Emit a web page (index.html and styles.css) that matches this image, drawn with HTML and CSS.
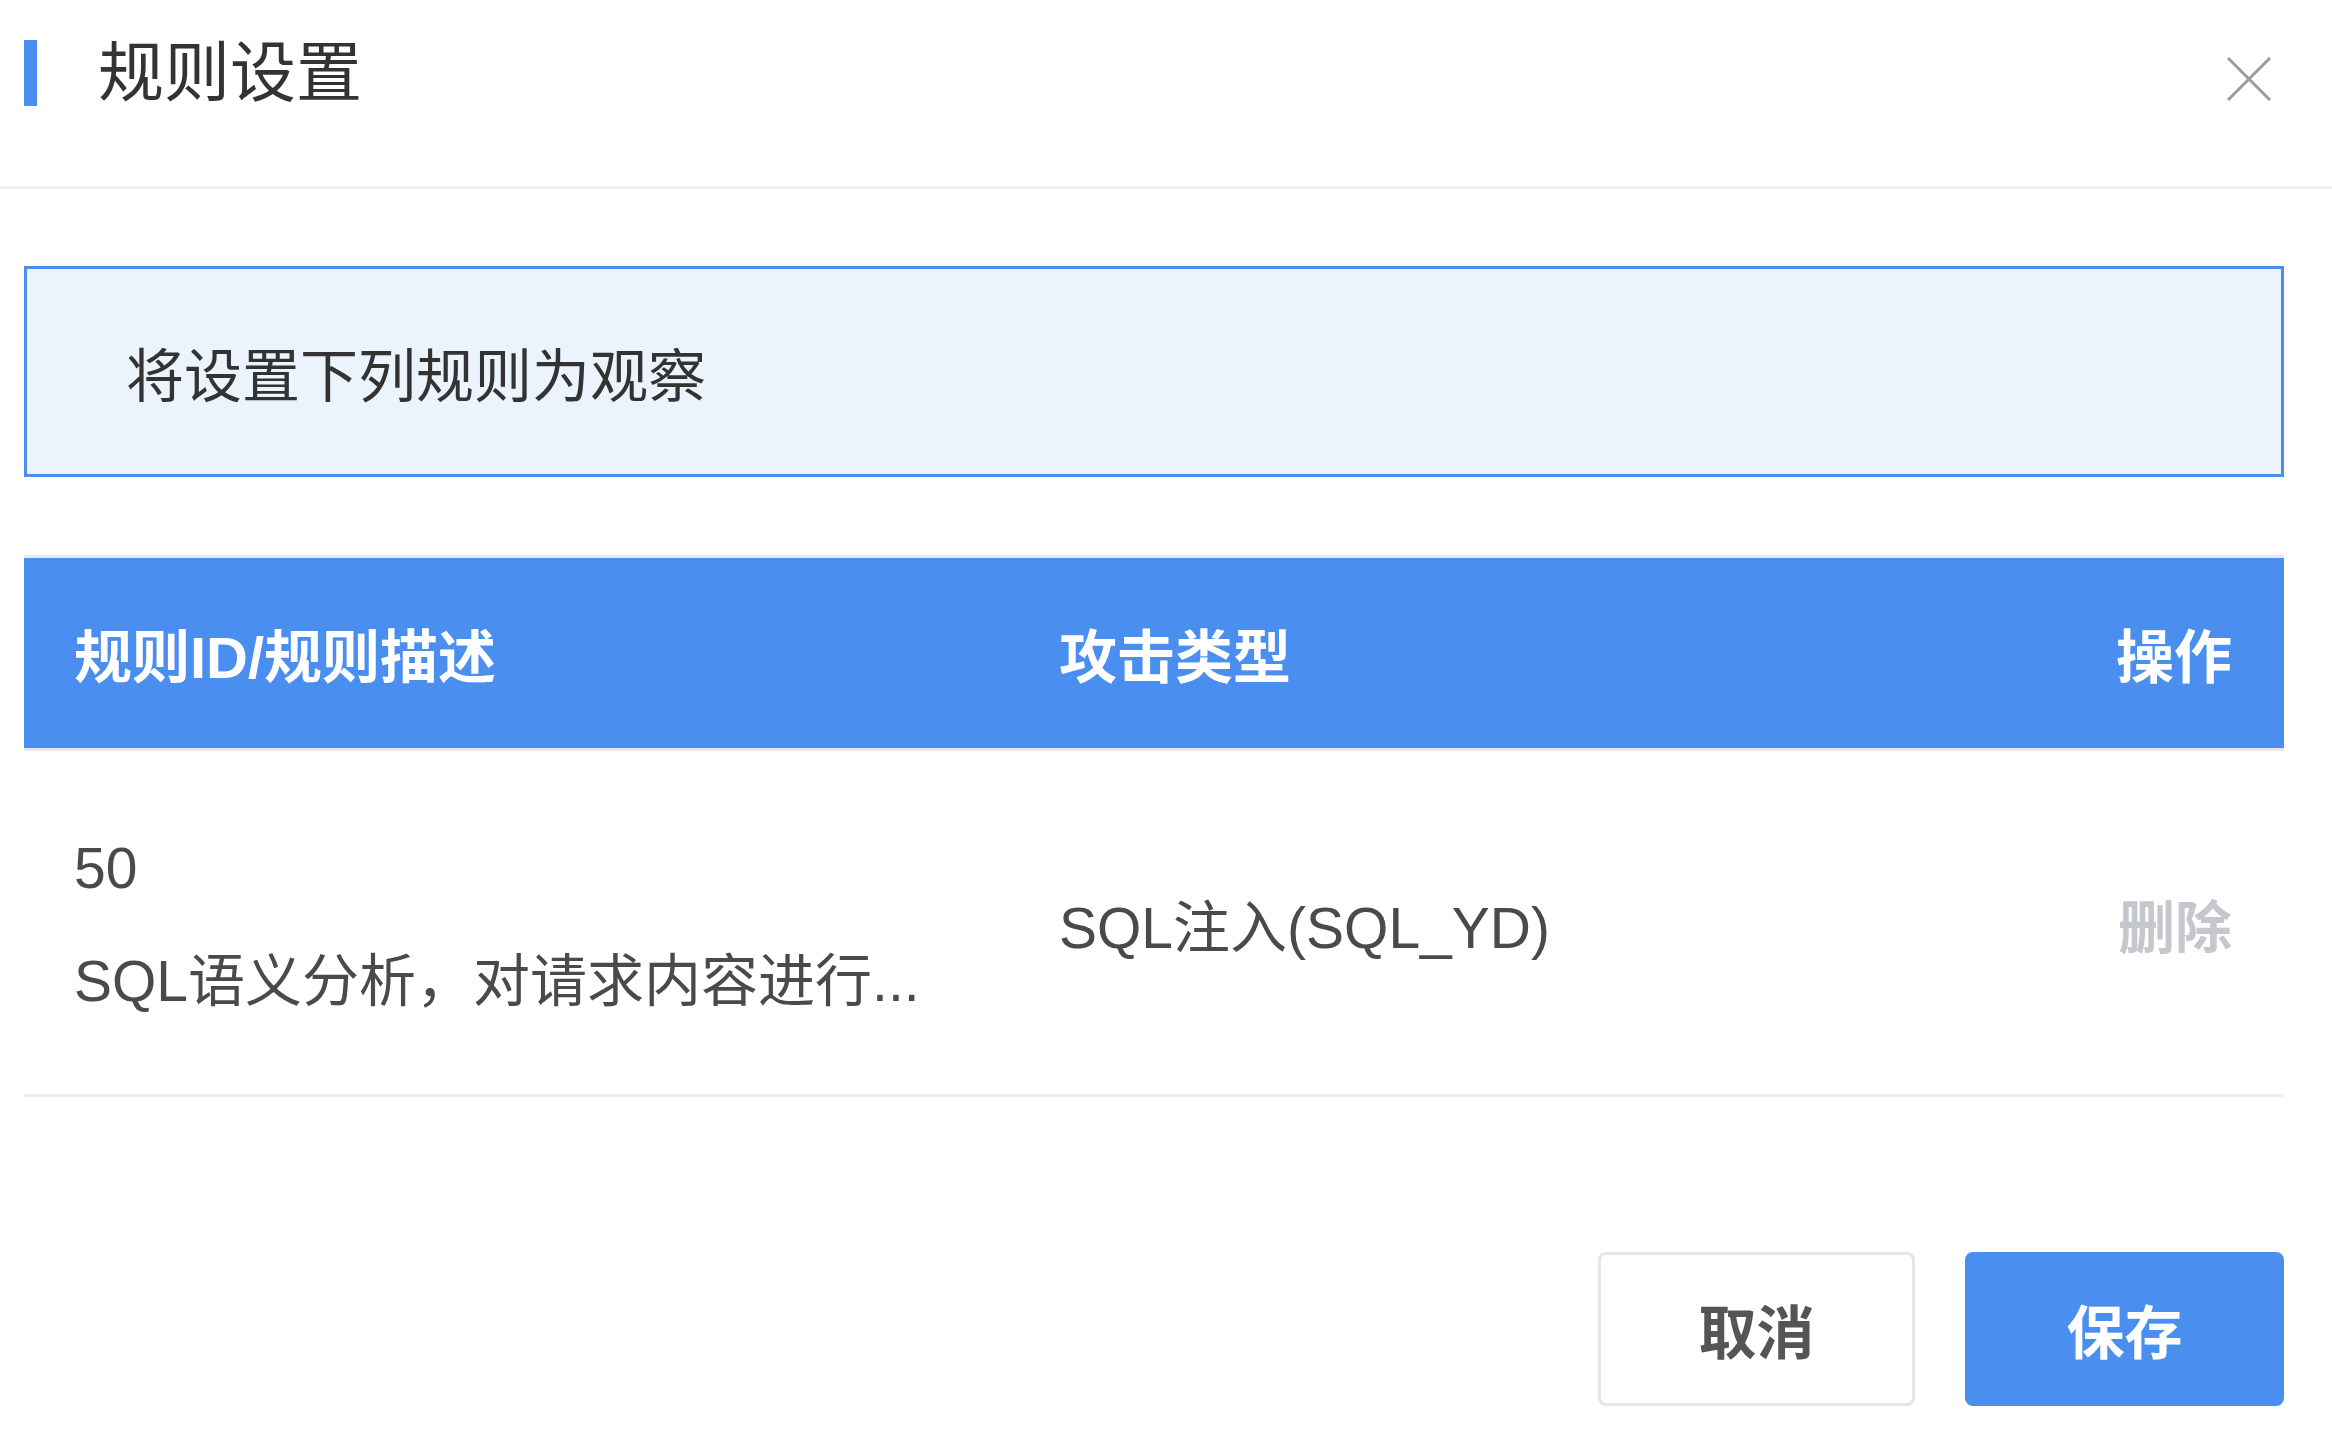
FILE: index.html
```html
<!DOCTYPE html>
<html lang="zh-CN">
<head>
  <meta charset="UTF-8">
  <meta name="viewport" content="width=device-width, initial-scale=1.0">
  <title>规则设置</title>
  <link rel="stylesheet" href="styles.css">
</head>
<body>
  <div class="dialog">
    <header class="dialog-header">
      <span class="title-mark"></span>
      <h2 class="dialog-title">规则设置</h2>
      <button type="button" class="dialog-close" aria-label="关闭">
        <svg width="44" height="44" viewBox="0 0 44 44">
          <path d="M1 1 L43 43 M43 1 L1 43" stroke="#9a9ca3" stroke-width="3" fill="none"/>
        </svg>
      </button>
    </header>

    <div class="dialog-body">
      <div class="notice">将设置下列规则为观察</div>

      <div class="rule-table">
        <div class="rule-row rule-head">
          <div class="cell">规则ID/规则描述</div>
          <div class="cell">攻击类型</div>
          <div class="cell cell-op">操作</div>
        </div>
        <div class="rule-row">
          <div class="cell cell-rule">
            <div class="rule-id">50</div>
            <div class="rule-desc">SQL语义分析，对请求内容进行...</div>
          </div>
          <div class="cell">SQL注入(SQL_YD)</div>
          <div class="cell cell-op"><a class="link-delete">删除</a></div>
        </div>
      </div>
    </div>

    <footer class="dialog-footer">
      <button type="button" class="btn">取消</button>
      <button type="button" class="btn btn-primary">保存</button>
    </footer>
  </div>
</body>
</html>
```

FILE: styles.css
```css
body {
  margin: 0;
  background: #ffffff;
  font-family: "Liberation Sans", "Noto Sans CJK SC", sans-serif;
  font-size: 58px;
  color: #333333;
}

.dialog-header {
  display: flex;
  align-items: flex-start;
  height: 146px;
  padding: 40px 0 0 24px;
  border-bottom: 3px solid #f0f0f0;
}

.title-mark {
  width: 13px;
  height: 66px;
  background: #4a8ff0;
}

.dialog-title {
  margin: 0 0 0 61px;
  font-size: 66px;
  font-weight: normal;
  line-height: 66px;
  color: #333333;
}

.dialog-close {
  margin: 17px 61px 0 auto;
  padding: 0;
  border: none;
  background: none;
  line-height: 0;
}

.dialog-body {
  padding: 77px 48px 0 24px;
}

.notice {
  display: flex;
  align-items: center;
  height: 205px;
  padding-left: 99px;
  border: 3px solid #4a8ff0;
  background: #ebf3fd;
  color: #333333;
}

.rule-table {
  margin-top: 78px;
  border-top: 3px solid #e4e8ef;
}

.rule-row {
  display: grid;
  grid-template-columns: 985px 1fr 400px;
  align-items: center;
  height: 343px;
  border-bottom: 3px solid #ebeef5;
  font-size: 57px;
  color: #4a4a4a;
}

.rule-head {
  height: 190px;
  border-bottom: 3px solid #e4e8ef;
  background: #4a8ff0;
  font-size: 58px;
  color: #ffffff;
  font-weight: bold;
}

.cell {
  padding: 0 50px;
}

.cell-op {
  padding-right: 52px;
  text-align: right;
}

.cell-rule {
  padding-top: 4px;
}

.rule-id, .rule-desc {
  line-height: 113px;
}

.rule-desc {
  white-space: nowrap;
}

.link-delete {
  color: #c4c7ce;
  font-weight: bold;
}

.dialog-footer {
  display: flex;
  justify-content: flex-end;
  gap: 50px;
  padding: 155px 48px 0 0;
}

.btn {
  width: 317px;
  height: 154px;
  border: 3px solid #e6e6e6;
  border-radius: 8px;
  background: #ffffff;
  font-family: inherit;
  font-size: 58px;
  font-weight: bold;
  color: #555555;
}

.btn-primary {
  width: 319px;
  border-color: #4a8ff0;
  background: #4a8ff0;
  color: #ffffff;
}
```
